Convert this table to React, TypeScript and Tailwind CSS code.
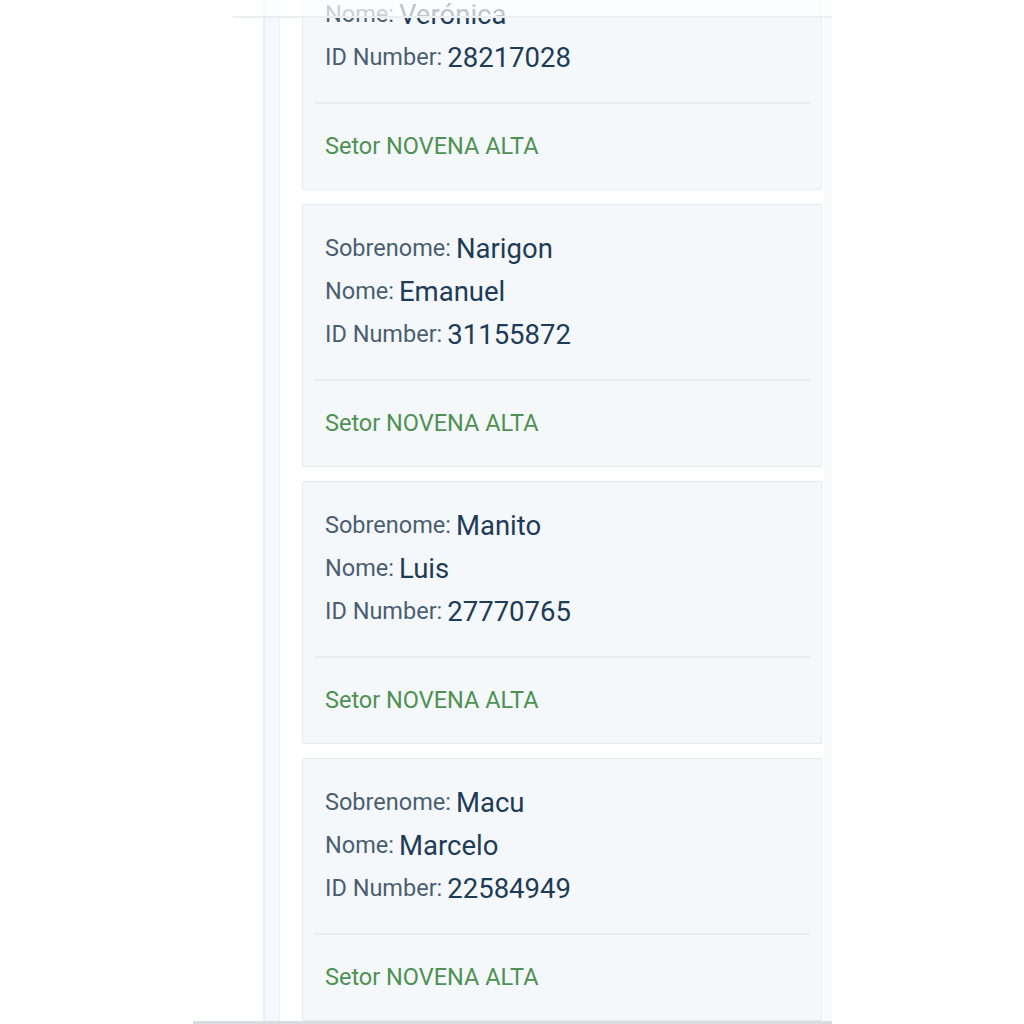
const people = [
  { sobrenome: "", nome: "Verónica", id: "28217028" },
  { sobrenome: "Narigon", nome: "Emanuel", id: "31155872" },
  { sobrenome: "Manito", nome: "Luis", id: "27770765" },
  { sobrenome: "Macu", nome: "Marcelo", id: "22584949" },
];

function Row({ label, value }: { label: string; value: string }) {
  return (
    <div className="h-[43px] flex items-center whitespace-nowrap">
      <span className="text-[23.5px] text-[#4b5e71]">{label}:</span>
      <span className="ml-[5px] text-[27.5px] text-[#1e3c57]">{value}</span>
    </div>
  );
}

function Card({ p }: { p: (typeof people)[number] }) {
  return (
    <div className="h-[263px] bg-[#f5f8fa] border border-[#e5eaef] rounded-[2px] flex flex-col">
      <div className="pt-[22px] pl-[22px]">
        <Row label="Sobrenome" value={p.sobrenome} />
        <Row label="Nome" value={p.nome} />
        <Row label="ID Number" value={p.id} />
      </div>
      <div className="mt-[23px] mx-[11px] h-[2px] bg-[#e9edf1]" />
      <div className="mt-[21px] pl-[22px] h-[43px] flex items-center text-[23.5px] text-[#4e9152] whitespace-nowrap">
        Setor NOVENA ALTA
      </div>
    </div>
  );
}

export default function App() {
  return (
    <div
      className="relative w-[1024px] h-[1024px] overflow-hidden bg-white"
      style={{ fontFamily: "Roboto, 'Noto Sans', sans-serif" }}
    >
      <div className="ml-[263px] w-[569px] h-[1024px] flex border-l-2 border-[#e8eef4]">
        <div className="w-[15px] bg-[#f6f9fc] border-r border-[#eef2f6]" />
        <div className="ml-[22px] w-[520px] -mt-[73px] flex flex-col gap-[14px]">
          {people.map((p) => (
            <Card key={p.id} p={p} />
          ))}
        </div>
        <div className="ml-[2px] w-[8px] bg-[#f7f9fb]" />
      </div>

      <div className="absolute top-0 left-[233px] w-[599px] h-[18px] bg-white/70 border-b-2 border-[#eceff2]" />
      <div className="absolute top-[1021px] left-[193px] w-[639px] h-[3px] bg-[#d9dde1]" />
    </div>
  );
}
